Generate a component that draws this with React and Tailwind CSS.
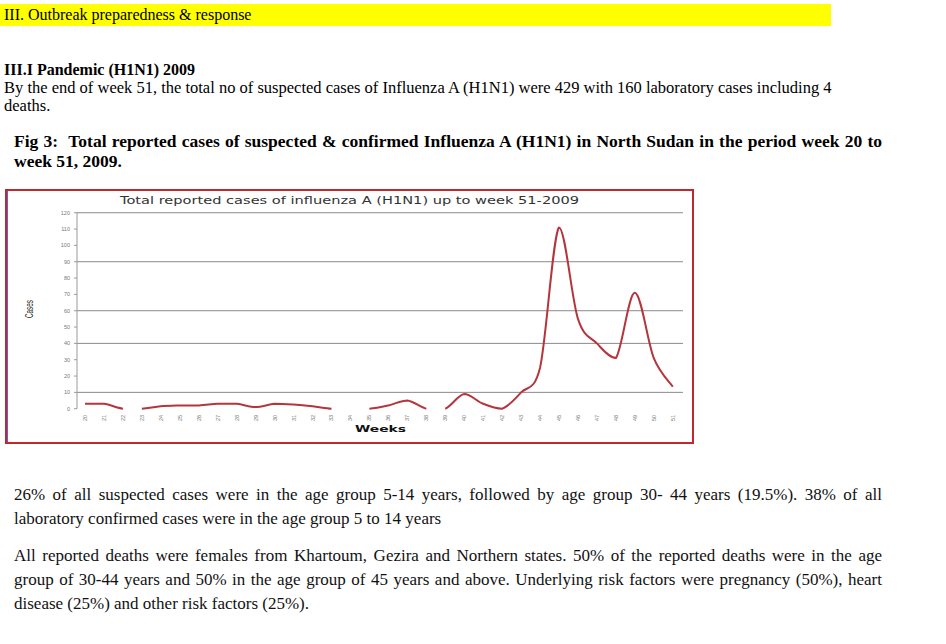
import React from 'react';

// Weekly totals, week 20 .. 51 (read off the figure)
const weeks = [
  3, 3, 0, 0, 1.5, 2, 2, 3, 3, 1, 3, 2.5, 1.5, 0, 0, 0,
  2, 5, 0, 0, 9, 3, 0, 10, 25, 111, 55, 40, 31, 71, 31, 13.5,
];

// page coords -> svg coords (svg sits inside the 2px border at 7,191)
const OX = 7;
const OY = 191;
const xAt = (i) => 85 + 18.96 * i - OX;
const yAt = (v) => 408.7 - v * 1.633 - OY;

const clamp = (v, a, b) => Math.min(Math.max(v, Math.min(a, b)), Math.max(a, b));

function curvePath(data) {
  const pts = data.map((v, i) => [xAt(i), yAt(v)]);
  let d = '';
  for (let i = 0; i < pts.length - 1; i++) {
    // zero-to-zero stretches are hidden in the original
    if (data[i] === 0 && data[i + 1] === 0) continue;
    const p0 = pts[i - 1] || pts[i];
    const p1 = pts[i];
    const p2 = pts[i + 1];
    const p3 = pts[i + 2] || p2;
    const c1 = [p1[0] + (p2[0] - p0[0]) / 6, clamp(p1[1] + (p2[1] - p0[1]) / 6, p1[1], p2[1])];
    const c2 = [p2[0] - (p3[0] - p1[0]) / 6, clamp(p2[1] - (p3[1] - p1[1]) / 6, p1[1], p2[1])];
    const prevDrawn = i > 0 && !(data[i - 1] === 0 && data[i] === 0);
    if (!prevDrawn || d === '') d += `M${p1[0].toFixed(1)},${p1[1].toFixed(1)} `;
    d += `C${c1[0].toFixed(1)},${c1[1].toFixed(1)} ${c2[0].toFixed(1)},${c2[1].toFixed(1)} ${p2[0].toFixed(1)},${p2[1].toFixed(1)} `;
  }
  return d;
}

function Chart() {
  const grid = [120, 90, 60, 40, 10];
  const ticks = [120, 110, 100, 90, 80, 70, 60, 50, 40, 30, 20, 10, 0];
  return (
    <div className="ml-[5px] mt-[18px] w-[689px] h-[255px] border-2 border-[#c1272d] shadow-[inset_1px_0_0_#5b63d6] bg-white">
      <svg width="685" height="251" viewBox="0 0 685 251" className="block">
        <text
          x={120 - OX}
          y={204 - OY}
          textLength="459"
          lengthAdjust="spacingAndGlyphs"
          fontFamily="'DejaVu Sans', sans-serif"
          fontSize="10"
          fill="#333"
        >
          Total reported cases of influenza A (H1N1) up to week 51-2009
        </text>

        {grid.map((g) => (
          <line key={g} x1={77 - OX} x2={683 - OX} y1={yAt(g)} y2={yAt(g)} stroke="#8a8a8a" strokeWidth="1" />
        ))}
        <line x1={77 - OX} x2={77 - OX} y1={yAt(120)} y2={yAt(0)} stroke="#9a9a9a" strokeWidth="1" />

        {ticks.map((t) => (
          <g key={t}>
            <line x1={74 - OX} x2={77 - OX} y1={yAt(t)} y2={yAt(t)} stroke="#9a9a9a" strokeWidth="1" />
            <text
              x={70 - OX}
              y={yAt(t) + 2}
              textAnchor="end"
              fontFamily="'Liberation Sans', sans-serif"
              fontSize="5.5"
              fill="#777"
            >
              {t}
            </text>
          </g>
        ))}

        <text
          transform={`translate(${33 - OX},${309 - OY}) rotate(-90)`}
          textAnchor="middle"
          textLength="18"
          lengthAdjust="spacingAndGlyphs"
          fontFamily="'Liberation Sans', sans-serif"
          fontSize="11"
          fill="#222"
        >
          Cases
        </text>

        {weeks.map((_, i) => (
          <text
            key={i}
            transform={`translate(${xAt(i) + 2},${418 - OY}) rotate(-90)`}
            textAnchor="middle"
            fontFamily="'Liberation Sans', sans-serif"
            fontSize="5.5"
            fill="#777"
          >
            {20 + i}
          </text>
        ))}

        <text
          x={355 - OX}
          y={432 - OY}
          textLength="51"
          lengthAdjust="spacingAndGlyphs"
          fontFamily="'DejaVu Sans', sans-serif"
          fontWeight="bold"
          fontSize="9.5"
          fill="#111"
        >
          Weeks
        </text>

        <path d={curvePath(weeks)} fill="none" stroke="#b4363d" strokeWidth="2" strokeLinejoin="round" />
      </svg>
    </div>
  );
}

export default function App() {
  return (
    <div className="w-[946px] min-h-[644px] bg-white text-black font-['Liberation_Serif',serif] pt-[4px]">
      <div className="w-[831px] h-[22px] bg-[#ffff00] pl-[4px] text-[16px] leading-[22px]">
        III. Outbreak preparedness &amp; response
      </div>

      <div className="mt-[35px] pl-[4px] w-[840px] text-[16px] leading-[18px]">
        <div className="font-bold">III.I Pandemic (H1N1) 2009</div>
        <p className="text-[16.5px]">
          By the end of week 51, the total no of suspected cases of Influenza A (H1N1) were 429 with 160 laboratory
          cases including 4 deaths.
        </p>
      </div>

      <p className="mt-[16px] ml-[14px] w-[868px] text-[17.5px] leading-[20px] font-bold text-justify">
        Fig 3:&nbsp; Total reported cases of suspected &amp; confirmed Influenza A (H1N1) in North Sudan in the period
        week 20 to week 51, 2009.
      </p>

      <Chart />

      <p className="mt-[39px] ml-[14px] w-[868px] text-[17px] leading-[24px] text-justify text-[#111]">
        26% of all suspected cases were in the age group 5-14 years, followed by age group 30- 44 years (19.5%). 38% of
        all laboratory confirmed cases were in the age group 5 to 14 years
      </p>
      <p className="mt-[13px] ml-[14px] w-[868px] text-[17px] leading-[24px] text-justify text-[#111]">
        All reported deaths were females from Khartoum, Gezira and Northern states. 50% of the reported deaths were in
        the age group of 30-44 years and 50% in the age group of 45 years and above. Underlying risk factors were
        pregnancy (50%), heart disease (25%) and other risk factors (25%).
      </p>
    </div>
  );
}
